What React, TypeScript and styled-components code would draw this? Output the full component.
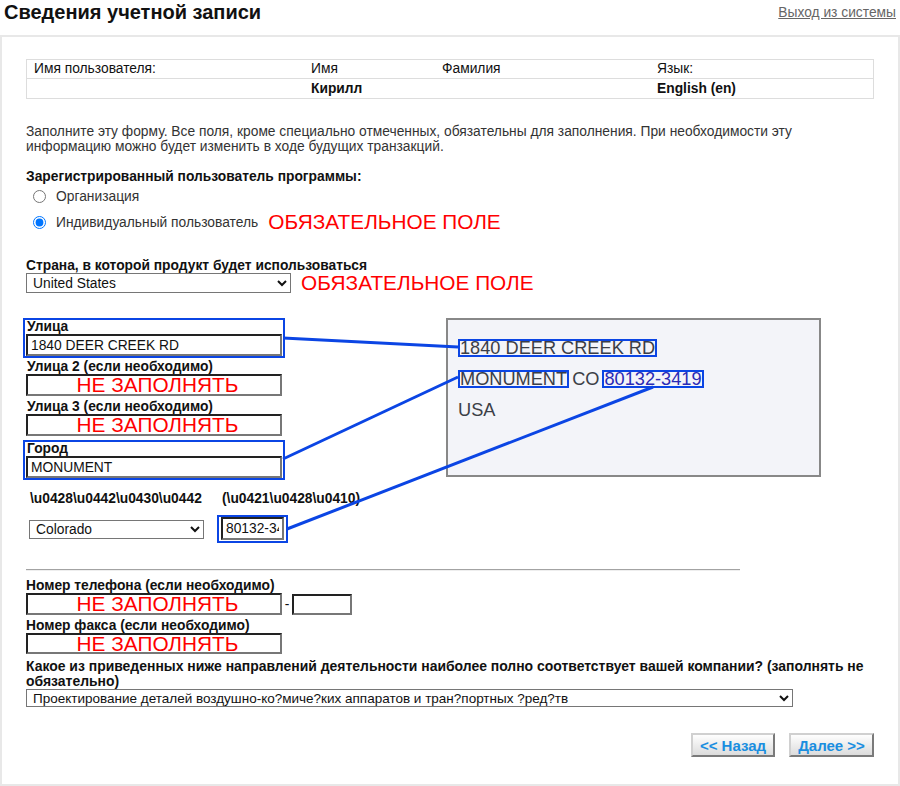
import * as React from 'react';
import styled, { createGlobalStyle } from 'styled-components';

const BLUE = '#0b45e4';

const GlobalStyle = createGlobalStyle`
  html, body {
    margin: 0;
    padding: 0;
    background: #fff;
  }
  body {
    font-family: "Liberation Sans", Arial, sans-serif;
    font-size: 13.8px;
    color: #222;
  }
`;

const Page = styled.div`
  width: 900px;
`;

const Header = styled.div`
  display: flex;
  justify-content: space-between;
  align-items: flex-start;
  height: 35px;
  padding: 0 4px;
`;

const Title = styled.h1`
  margin: 0;
  font-size: 20px;
  line-height: 24px;
  font-weight: bold;
  color: #111;
`;

const Logout = styled.a`
  margin-top: 5px;
  font-size: 13.8px;
  color: #666;
  text-decoration: underline;
  cursor: pointer;
`;

const Panel = styled.div`
  box-sizing: border-box;
  width: 900px;
  border: 2px solid #e8e8e8;
  padding: 22px 24px 27px 24px;
`;

const InfoTable = styled.div`
  display: grid;
  grid-template-columns: 277px 131px 215px 1fr;
  border: 1px solid #ddd;
`;

const Cell = styled.div<{ $bold?: boolean; $second?: boolean }>`
  padding: 0 7px;
  height: ${(p) => (p.$second ? 19 : 18)}px;
  line-height: ${(p) => (p.$second ? 19 : 18)}px;
  color: #111;
  font-weight: ${(p) => (p.$bold ? 'bold' : 'normal')};
  border-top: ${(p) => (p.$second ? '1px solid #ddd' : 'none')};
`;

const Intro = styled.p`
  margin: 25px 0 0;
  line-height: 15px;
  color: #333;
`;

const Heading = styled.div<{ $gap: number }>`
  margin-top: ${(p) => p.$gap}px;
  font-weight: bold;
  line-height: 15px;
  color: #111;
`;

const RadioRow = styled.label<{ $gap?: number }>`
  display: flex;
  align-items: center;
  height: 20px;
  margin-top: ${(p) => p.$gap || 0}px;
  color: #333;
`;

const Radio = styled.input`
  width: 13px;
  height: 13px;
  margin: 0 10px 0 7px;
`;

const Required = styled.span`
  margin-left: 10px;
  font-size: 20.8px;
  line-height: 20px;
  color: #f00;
`;

const CountryRow = styled.div`
  display: flex;
  align-items: center;
  height: 20px;
`;

const Select = styled.select<{ $w: number; $h?: number; $fs?: number }>`
  box-sizing: border-box;
  width: ${(p) => p.$w}px;
  height: ${(p) => p.$h || 20}px;
  margin: 0;
  padding: 0 2px;
  border: 1px solid #767676;
  border-radius: 0;
  background: #fff;
  font-family: "Liberation Sans", Arial, sans-serif;
  font-size: ${(p) => p.$fs || 13.8}px;
  color: #111;
`;

const AddressArea = styled.div`
  position: relative;
  margin-top: 25px;
`;

const AddressRow = styled.div`
  display: flex;
  align-items: flex-start;
`;

const Fields = styled.div`
  width: 256px;
`;

const FieldGroup = styled.div<{ $hl?: boolean; $gap?: number }>`
  width: 256px;
  margin: ${(p) => p.$gap || 0}px -3px 0;
  padding: 0 1px;
  border: 2px solid ${(p) => (p.$hl ? BLUE : 'transparent')};
`;

const FieldLabel = styled.div`
  padding-left: 1px;
  font-weight: bold;
  line-height: 14px;
  color: #111;
  white-space: nowrap;
`;

const TextInput = styled.input<{ $warn?: boolean; $w?: number; $h?: number }>`
  box-sizing: border-box;
  display: block;
  width: ${(p) => p.$w || 256}px;
  height: ${(p) => p.$h || 22}px;
  margin: 0;
  padding: ${(p) => (p.$warn ? '0 0 0 7px' : '0 3px')};
  border: 2px solid;
  border-color: #222 #777 #777 #222;
  border-radius: 0;
  outline: none;
  background: #fff;
  font-family: "Liberation Sans", Arial, sans-serif;
  font-size: ${(p) => (p.$warn ? '20.8px' : '13.8px')};
  color: ${(p) => (p.$warn ? '#f00' : '#111')};
  text-align: ${(p) => (p.$warn ? 'center' : 'left')};
`;

const Preview = styled.div`
  box-sizing: border-box;
  width: 375px;
  height: 159px;
  margin: 0 0 0 164px;
  padding: 19px 0 0 10px;
  border: 2px solid #888;
  background: #f3f4f9;
  font-size: 18.2px;
  color: #3b3e47;
`;

const PreviewLine = styled.div`
  height: 18px;
  line-height: 18px;
  margin-bottom: 13px;
  white-space: nowrap;
  word-spacing: -2px;
`;

const Mark = styled.span<{ $link?: boolean }>`
  display: inline-block;
  vertical-align: top;
  line-height: 14px;
  border: 2px solid ${BLUE};
  word-spacing: 0;
  color: ${(p) => (p.$link ? '#2a2ab5' : 'inherit')};
`;

const StateGrid = styled.div`
  display: grid;
  grid-template-columns: 191px 1fr;
  row-gap: 9px;
  margin-top: 11px;
  align-items: center;
`;

const StateLabel = styled.div<{ $pad: number }>`
  padding-left: ${(p) => p.$pad}px;
  font-weight: bold;
  line-height: 15px;
  color: #111;
  white-space: nowrap;
`;

const StateSelectCell = styled.div`
  padding-left: 3px;
`;

const ZipBox = styled.div`
  width: 63px;
  padding: 0 2px 1px;
  border: 2px solid ${BLUE};
`;

const Lines = styled.svg`
  position: absolute;
  top: 0;
  left: 0;
  width: 100%;
  height: 100%;
  overflow: visible;
  pointer-events: none;
`;

const Rule = styled.div`
  width: 714px;
  margin-top: 26px;
  border-top: 1px solid #a3a3a3;
  border-bottom: 1px solid #eee;
`;

const PlainLabel = styled.div<{ $gap: number }>`
  margin-top: ${(p) => p.$gap}px;
  font-weight: bold;
  line-height: 14px;
  color: #111;
`;

const PhoneRow = styled.div`
  display: flex;
  align-items: center;
`;

const Dash = styled.span`
  width: 10px;
  text-align: center;
  color: #111;
`;

const Question = styled.div`
  margin-top: 5px;
  font-size: 13.95px;
  font-weight: bold;
  line-height: 15px;
  color: #111;
`;

const Buttons = styled.div`
  display: flex;
  justify-content: flex-end;
  gap: 14px;
  margin-top: 26px;
`;

const NavButton = styled.button<{ $w: number }>`
  box-sizing: border-box;
  width: ${(p) => p.$w}px;
  height: 24px;
  padding: 0;
  border: 2px solid;
  border-color: #d0d0d0 #7a7a7a #7a7a7a #d0d0d0;
  border-radius: 0;
  background: linear-gradient(#fefefe, #dcdcdc);
  font-family: "Liberation Sans", Arial, sans-serif;
  font-size: 15px;
  font-weight: bold;
  color: #1a8ee0;
  cursor: pointer;
`;

const industry =
  'Проектирование деталей воздушно-ко?миче?ких аппаратов и тран?портных ?ред?тв';

export default function App() {
  const [kind, setKind] = React.useState('person');

  return (
    <Page>
      <GlobalStyle />
      <Header>
        <Title>Сведения учетной записи</Title>
        <Logout>Выход из системы</Logout>
      </Header>
      <Panel>
        <InfoTable>
          <Cell>Имя пользователя:</Cell>
          <Cell>Имя</Cell>
          <Cell>Фамилия</Cell>
          <Cell>Язык:</Cell>
          <Cell $second />
          <Cell $second $bold>Кирилл</Cell>
          <Cell $second />
          <Cell $second $bold>English (en)</Cell>
        </InfoTable>

        <Intro>
          Заполните эту форму. Все поля, кроме специально отмеченных, обязательны для заполнения. При необходимости эту
          информацию можно будет изменить в ходе будущих транзакций.
        </Intro>

        <Heading $gap={15}>Зарегистрированный пользователь программы:</Heading>
        <RadioRow $gap={2}>
          <Radio type="radio" name="kind" checked={kind === 'org'} onChange={() => setKind('org')} />
          Организация
        </RadioRow>
        <RadioRow $gap={6}>
          <Radio type="radio" name="kind" checked={kind === 'person'} onChange={() => setKind('person')} />
          Индивидуальный пользователь
          <Required>ОБЯЗАТЕЛЬНОЕ ПОЛЕ</Required>
        </RadioRow>

        <Heading $gap={26}>Страна, в которой продукт будет использоваться</Heading>
        <CountryRow>
          <Select $w={265} defaultValue="us">
            <option value="us">United States</option>
          </Select>
          <Required>ОБЯЗАТЕЛЬНОЕ ПОЛЕ</Required>
        </CountryRow>

        <AddressArea>
          <AddressRow>
            <Fields>
              <FieldGroup $hl>
                <FieldLabel>Улица</FieldLabel>
                <TextInput defaultValue="1840 DEER CREEK RD" />
              </FieldGroup>
              <FieldGroup>
                <FieldLabel>Улица 2 (если необходимо)</FieldLabel>
                <TextInput $warn readOnly value="НЕ ЗАПОЛНЯТЬ" />
              </FieldGroup>
              <FieldGroup>
                <FieldLabel>Улица 3 (если необходимо)</FieldLabel>
                <TextInput $warn readOnly value="НЕ ЗАПОЛНЯТЬ" />
              </FieldGroup>
              <FieldGroup $hl $gap={2}>
                <FieldLabel>Город</FieldLabel>
                <TextInput defaultValue="MONUMENT" />
              </FieldGroup>
            </Fields>
            <Preview>
              <PreviewLine>
                <Mark>1840 DEER CREEK RD</Mark>
              </PreviewLine>
              <PreviewLine>
                <Mark>MONUMENT</Mark> CO <Mark $link>80132-3419</Mark>
              </PreviewLine>
              <PreviewLine>USA</PreviewLine>
            </Preview>
          </AddressRow>

          <StateGrid>
            <StateLabel $pad={4}>\u0428\u0442\u0430\u0442</StateLabel>
            <StateLabel $pad={5}>(\u0421\u0428\u0410)</StateLabel>
            <StateSelectCell>
              <Select $w={175} $h={19} defaultValue="co">
                <option value="co">Colorado</option>
              </Select>
            </StateSelectCell>
            <ZipBox>
              <TextInput $w={63} $h={23} defaultValue="80132-3419" />
            </ZipBox>
          </StateGrid>

          <Lines>
            <g stroke={BLUE} strokeWidth={3} fill="none">
              <line x1={257} y1={20} x2={432} y2={29} />
              <line x1={257} y1={141} x2={432} y2={59} />
              <line x1={261} y1={211} x2={627} y2={69} />
            </g>
          </Lines>
        </AddressArea>

        <Rule />

        <PlainLabel $gap={8}>Номер телефона (если необходимо)</PlainLabel>
        <PhoneRow>
          <TextInput $warn readOnly value="НЕ ЗАПОЛНЯТЬ" />
          <Dash>-</Dash>
          <TextInput $w={60} $h={21} defaultValue="" />
        </PhoneRow>
        <PlainLabel $gap={4}>Номер факса (если необходимо)</PlainLabel>
        <TextInput $warn $h={21} readOnly value="НЕ ЗАПОЛНЯТЬ" />

        <Question>
          Какое из приведенных ниже направлений деятельности наиболее полно соответствует вашей компании? (заполнять не
          обязательно)
        </Question>
        <Select $w={767} $h={18} $fs={13.5} defaultValue="aero">
          <option value="aero">{industry}</option>
        </Select>

        <Buttons>
          <NavButton $w={84}>&lt;&lt; Назад</NavButton>
          <NavButton $w={85}>Далее &gt;&gt;</NavButton>
        </Buttons>
      </Panel>
    </Page>
  );
}
